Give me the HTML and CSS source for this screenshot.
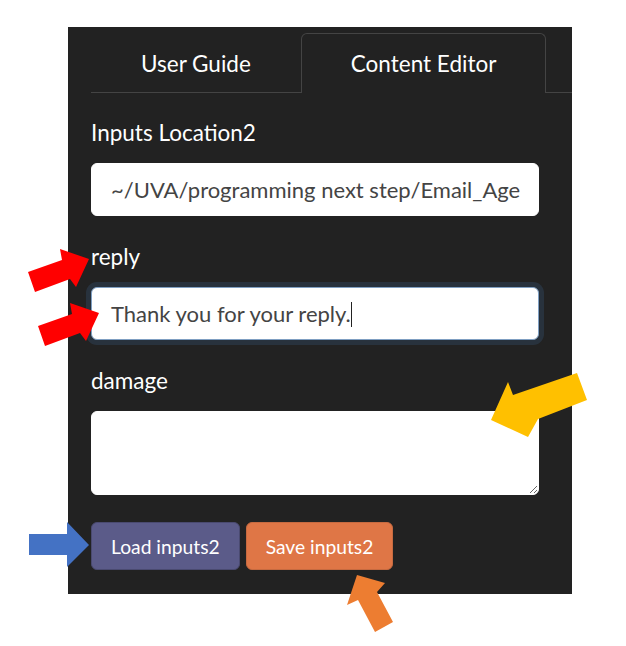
FILE: index.html
```html
<!DOCTYPE html>
<html lang="en">
<head>
<meta charset="utf-8">
<title>Content Editor</title>
<link rel="stylesheet" href="styles.css">
</head>
<body>
<div class="page">
  <div class="panel">
    <ul class="tabs">
      <li class="tab">User Guide</li>
      <li class="tab active">Content Editor</li>
    </ul>
    <div class="content">
      <div class="group">
        <label class="label">Inputs Location2</label>
        <div class="field">~/UVA/programming next step/Email_Age</div>
      </div>
      <div class="group">
        <label class="label">reply</label>
        <div class="field focused">Thank you for your reply.<span class="caret"></span></div>
      </div>
      <div class="group">
        <label class="label">damage</label>
        <textarea class="area"></textarea>
      </div>
      <div class="actions">
        <button class="btn btn-load">Load inputs2</button>
        <button class="btn btn-save">Save inputs2</button>
      </div>
    </div>
  </div>
  <svg class="annotations" width="626" height="646" viewBox="0 0 626 646">
    <polygon class="arrow-red" points="28,272 62,260 60,249 89,259 76,287 70,279 35,292"/>
    <polygon class="arrow-red" points="38,326 72,314 70,303 99,313 86,341 80,333 45,346"/>
    <polygon class="arrow-yellow" points="577,373 587,400 538,419 528,437 491,420 508,382 513,395"/>
    <polygon class="arrow-orange" points="357,575 385,583 377,592 393,622 375,632 358,600 347,605"/>
    <polygon class="arrow-blue" points="29,534 67,534 67,522 89,545 67,567 67,555 29,555"/>
  </svg>
</div>
</body>
</html>
```

FILE: styles.css
```css
html, body {
  margin: 0;
  padding: 0;
  background: #ffffff;
}

body {
  font-family: Lato, "Open Sans", "DejaVu Sans", sans-serif;
}

.page {
  position: relative;
  width: 626px;
  height: 646px;
  padding: 27px 0 0 68px;
  box-sizing: border-box;
  overflow: hidden;
}

.panel {
  width: 504px;
  height: 567px;
  background: #222222;
  padding: 6px 0 0 23px;
  box-sizing: border-box;
}

.tabs {
  display: flex;
  list-style: none;
  margin: 0;
  padding: 0;
  border-bottom: 1px solid #444444;
}

.tab {
  height: 60px;
  box-sizing: border-box;
  margin-bottom: -1px;
  padding: 0 49px;
  border: 1px solid transparent;
  border-bottom: none;
  border-radius: 6px 6px 0 0;
  color: #ffffff;
  font-size: 22.5px;
  line-height: 60px;
  white-space: nowrap;
}

.tab.active {
  border-color: #444444;
  background: #222222;
}

.content {
  width: 448px;
  padding-top: 26px;
}

.group {
  margin-bottom: 27px;
}

.label {
  display: block;
  color: #ffffff;
  font-size: 22.5px;
  line-height: 28px;
  margin-bottom: 16px;
}

.field {
  height: 53px;
  box-sizing: border-box;
  padding: 0 19px;
  background: #ffffff;
  border: 1px solid #ffffff;
  border-radius: 6px;
  color: #444444;
  font-size: 22px;
  line-height: 51px;
  white-space: nowrap;
  overflow: hidden;
}

.field.focused {
  border-color: #7f9fc2;
  box-shadow: 0 0 0 5px rgba(55, 90, 127, 0.3);
}

.caret {
  display: inline-block;
  width: 1px;
  height: 25px;
  background: #222222;
  vertical-align: -5px;
}

.area {
  display: block;
  width: 448px;
  height: 84px;
  box-sizing: border-box;
  margin: 0;
  padding: 10px 19px;
  border: 1px solid #ffffff;
  border-radius: 6px;
  background: #ffffff;
  color: #444444;
  font-family: inherit;
  font-size: 22px;
  outline: none;
}

.actions {
  display: flex;
  gap: 6px;
}

.btn {
  height: 48px;
  box-sizing: border-box;
  padding: 0 19px;
  border-radius: 6px;
  font-family: inherit;
  font-size: 19.25px;
  color: #ffffff;
  cursor: pointer;
}

.btn-load {
  background: #5b5b89;
  border: 1px solid #4a4a70;
}

.btn-save {
  background: #df7646;
  border: 1px solid #c66a40;
}

.annotations {
  position: absolute;
  left: 0;
  top: 0;
  pointer-events: none;
}

.arrow-red { fill: #ff0000; }
.arrow-yellow { fill: #ffc000; }
.arrow-orange { fill: #ed7d31; }
.arrow-blue { fill: #4472c4; }
```
